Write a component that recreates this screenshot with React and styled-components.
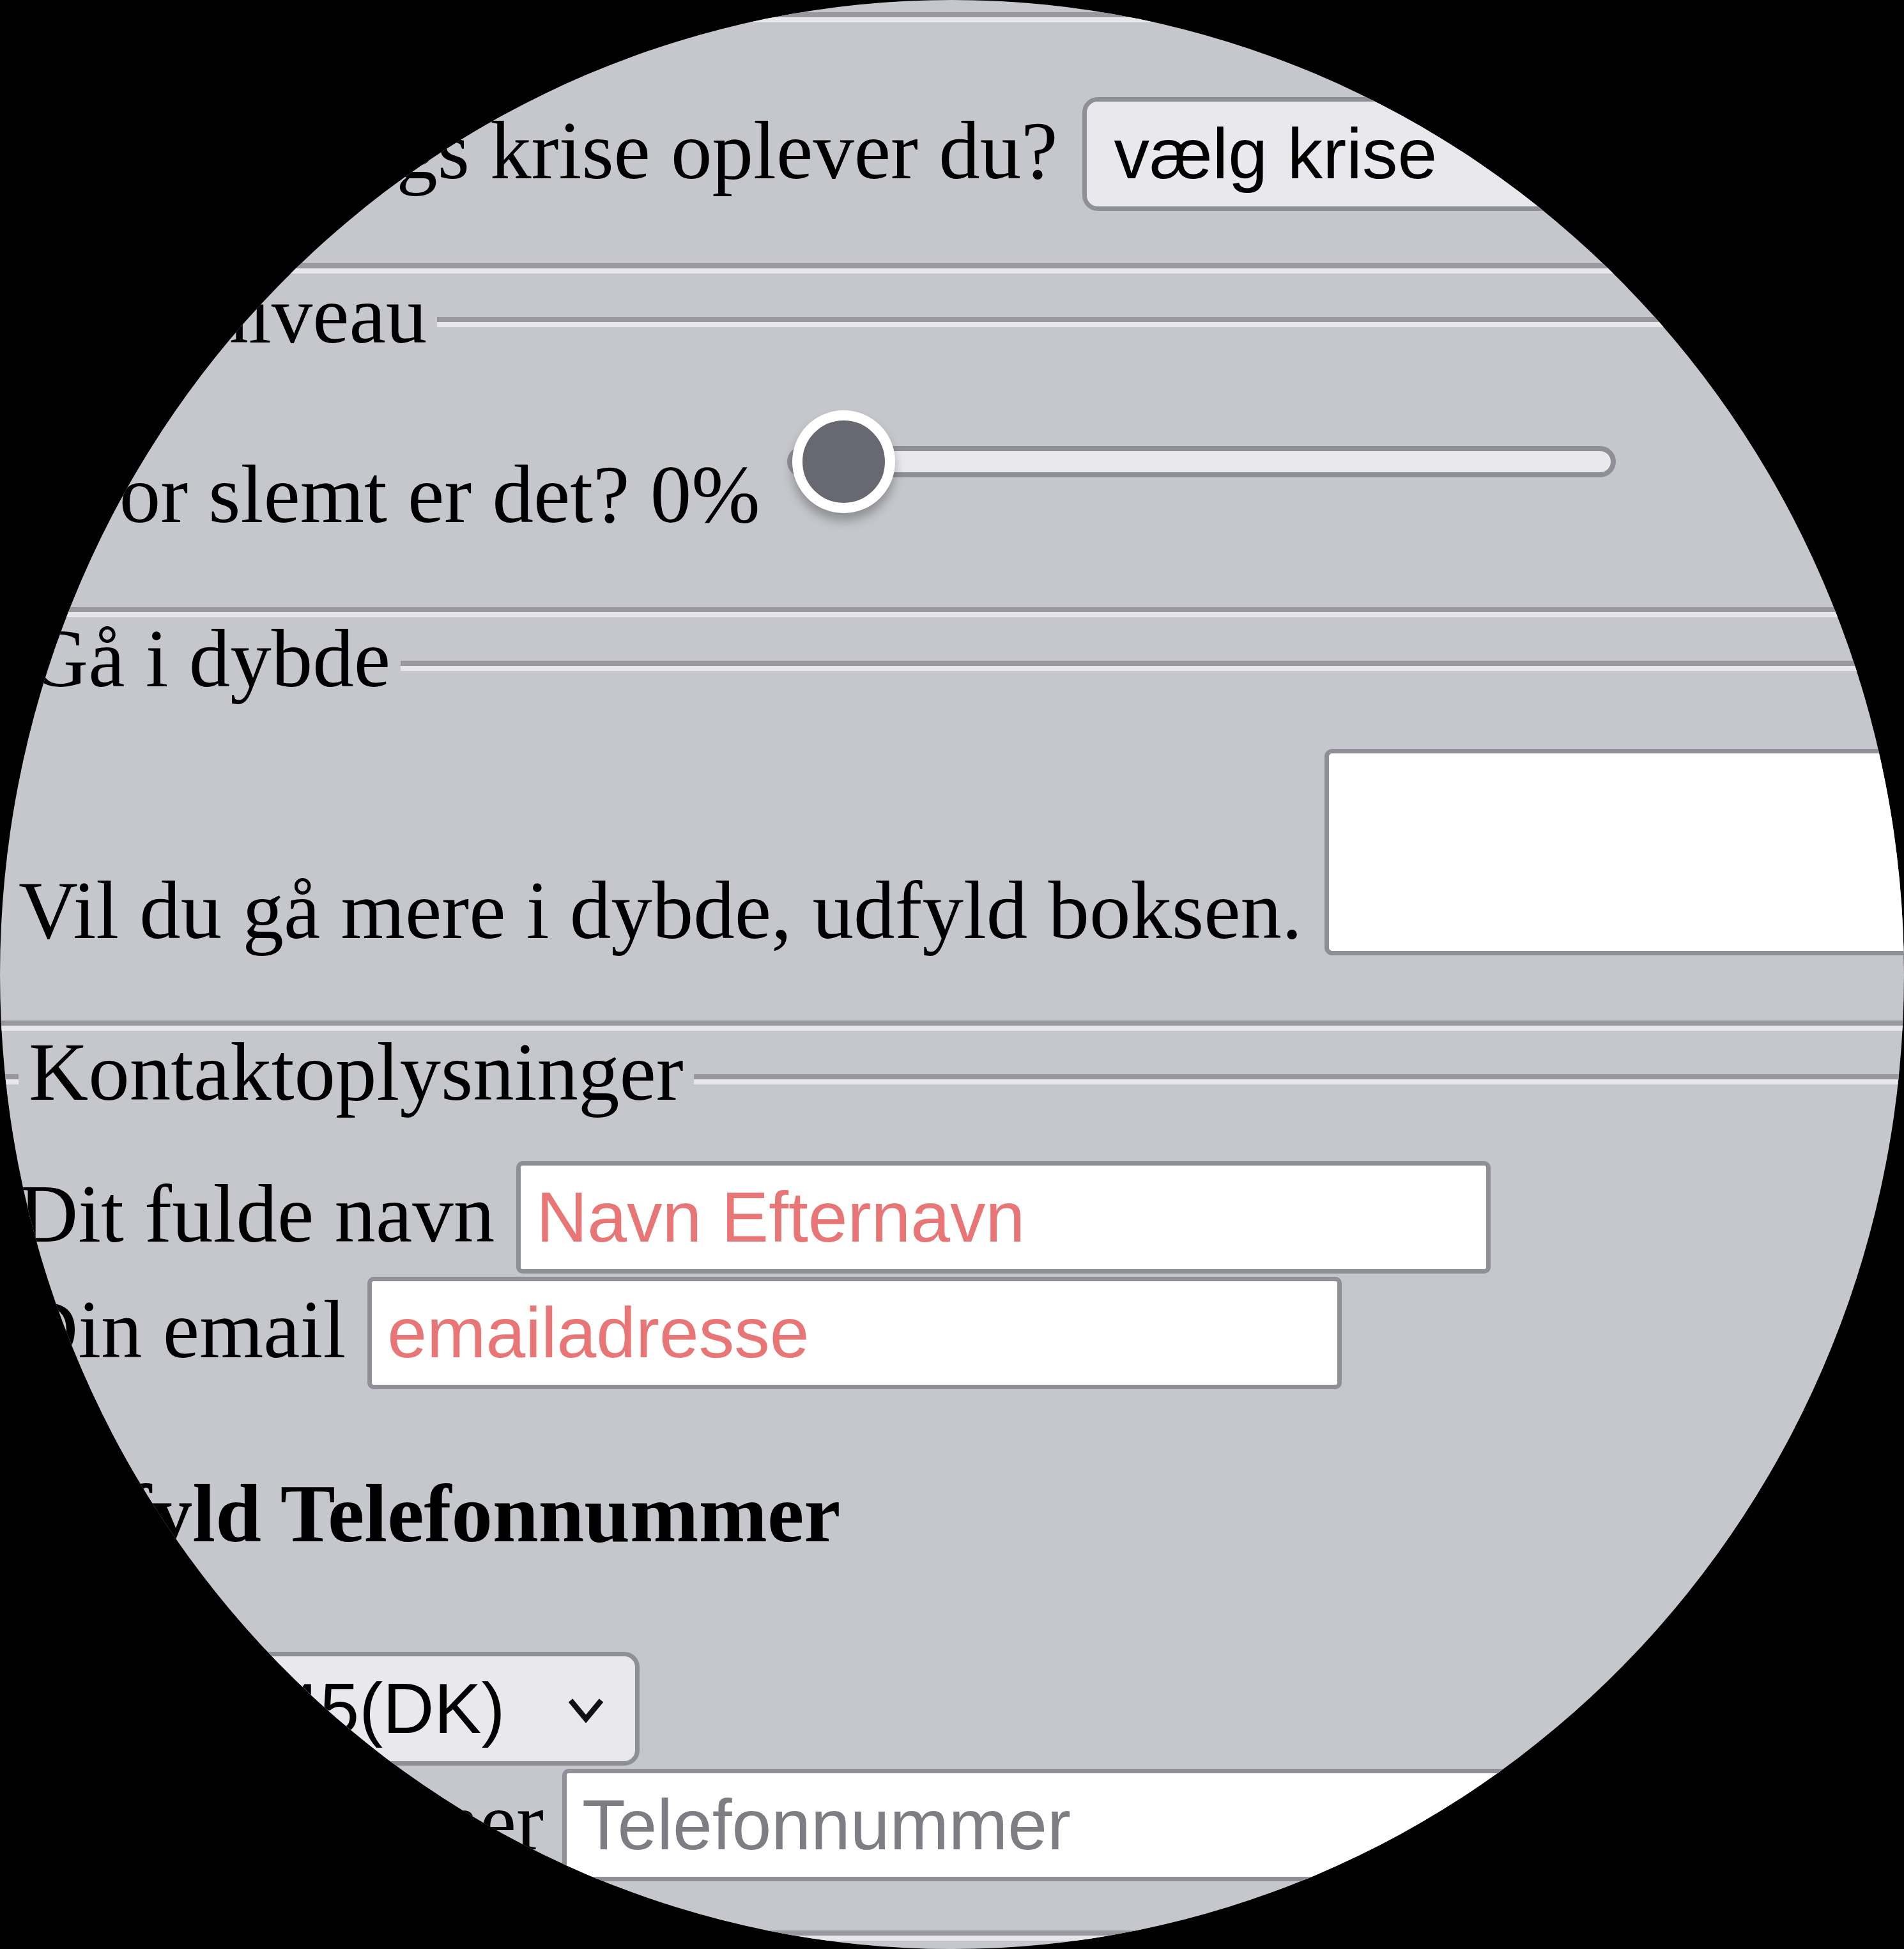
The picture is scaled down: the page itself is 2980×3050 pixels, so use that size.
import React from 'react';
import styled, { createGlobalStyle } from 'styled-components';

const GlobalStyle = createGlobalStyle`
  html, body {
    margin: 0;
    padding: 0;
    background: #000;
  }
  body {
    overflow: hidden;
  }
`;

const Lens = styled.div`
  width: 2980px;
  height: 3050px;
  border-radius: 50%;
  overflow: hidden;
  background: #c6c7cc;
`;

const Page = styled.form`
  width: 3300px;
  margin: -49px 0 0 -84px;
  font-family: "Liberation Serif", "Times New Roman", serif;
  font-size: 129px;
  line-height: 129px;
  color: #000;
`;

const Fieldset = styled.section`
  display: flex;
  flex-direction: column;
`;

const Groove = styled.div`
  box-sizing: border-box;
  height: 16px;
  border-top: 8px solid #98989e;
  border-bottom: 8px solid #e7e7eb;
  flex: ${p => (p.$fill ? 1 : 'none')};
  width: ${p => (p.$w ? `${p.$w}px` : 'auto')};
  margin-top: ${p => (p.$inLegend ? '68px' : '0')};
`;

const LegendRow = styled.div`
  display: flex;
  align-items: flex-start;
  height: 129px;
`;

const Legend = styled.span`
  padding: 0 16px;
  white-space: nowrap;
`;

const Body = styled.div`
  display: flex;
  flex-direction: column;
  align-items: flex-start;
  padding: ${p => p.$top}px 0 ${p => p.$bottom}px 113px;
`;

const Row = styled.div`
  display: flex;
  align-items: ${p => p.$align || 'baseline'};
  gap: ${p => p.$gap ?? 34}px;
  margin-top: ${p => p.$mt || 0}px;
  white-space: nowrap;
`;

const Label = styled.label`
  flex: none;
`;

const Heading = styled.h4`
  margin: ${p => p.$mt}px 0 0;
  font-size: 129px;
  line-height: 129px;
  font-weight: bold;
`;

const SelectWrap = styled.div`
  position: relative;
  display: inline-flex;
  flex: none;
`;

const Select = styled.select`
  appearance: none;
  -webkit-appearance: none;
  box-sizing: border-box;
  width: ${p => p.$w}px;
  height: 178px;
  padding: 0 130px 0 42px;
  border: 7px solid #8f8f97;
  border-radius: 24px;
  background: #e9e9ed;
  color: #000;
  font-family: "Liberation Sans", Arial, sans-serif;
  font-size: 111px;
  outline: none;
`;

const Chevron = styled.svg`
  position: absolute;
  right: 55px;
  top: 50%;
  width: 58px;
  height: 40px;
  margin-top: -18px;
  pointer-events: none;
`;

const TextInput = styled.input`
  box-sizing: border-box;
  width: 1525px;
  height: 176px;
  padding: 0 24px;
  border: 7px solid #8f8f97;
  border-radius: 10px;
  background: #fff;
  color: #000;
  font-family: "Liberation Sans", Arial, sans-serif;
  font-size: 111px;
  outline: none;
  flex: none;

  &::placeholder {
    color: ${p => (p.$warn ? '#e87676' : '#7d7d83')};
  }
`;

const TextArea = styled.textarea`
  box-sizing: border-box;
  width: 1200px;
  height: 323px;
  margin: 0 0 -6px;
  border: 7px solid #8f8f97;
  border-radius: 12px;
  background: #fff;
  resize: none;
  outline: none;
  flex: none;
`;

const Slider = styled.div`
  position: relative;
  display: flex;
  align-items: center;
  flex: none;
  width: 1297px;
  height: 161px;
  margin-bottom: 35px;
`;

const Track = styled.div`
  flex: 1;
  box-sizing: border-box;
  height: 49px;
  border: 8px solid #8f8f97;
  border-radius: 25px;
  background: #e9e8ed;
`;

const Thumb = styled.span`
  position: absolute;
  left: 8px;
  top: 0;
  box-sizing: border-box;
  width: 161px;
  height: 161px;
  border-radius: 50%;
  border: 16px solid #fff;
  background: #686872;
  box-shadow: 0 12px 16px rgba(0, 0, 0, 0.28);
`;

const Group = ({ legend, top, bottom, children }) => (
  <Fieldset>
    <LegendRow>
      <Groove $inLegend $w={113} />
      <Legend>{legend}</Legend>
      <Groove $inLegend $fill />
    </LegendRow>
    <Body $top={top} $bottom={bottom}>{children}</Body>
    <Groove />
  </Fieldset>
);

const Dropdown = ({ width, options }) => (
  <SelectWrap>
    <Select $w={width} defaultValue={options[0]}>
      {options.map(o => (
        <option key={o} value={o}>{o}</option>
      ))}
    </Select>
    <Chevron viewBox="0 0 58 40">
      <polyline points="5,5 29,34 53,5" fill="none" stroke="#111" strokeWidth="8.5" />
    </Chevron>
  </SelectWrap>
);

export default function App() {
  const level = 0;
  return (
    <>
      <GlobalStyle />
      <Lens>
        <Page>
          <Group legend="Krise" top={72} bottom={82}>
            <Row $gap={39}>
              <Label>Hvilken slags krise oplever du?</Label>
              <Dropdown width={1000} options={['vælg krise', 'Økonomisk', 'Personlig', 'Andet']} />
            </Row>
          </Group>

          <Group legend="Kriseniveau" top={85} bottom={112}>
            <Row $align="flex-end" $gap={42}>
              <Label>Hvor slemt er det? {level}%</Label>
              <Slider role="slider" aria-valuenow={level} aria-valuemin={0} aria-valuemax={100}>
                <Track />
                <Thumb style={{ left: `${8 + level * 11.28}px` }} />
              </Slider>
            </Row>
          </Group>

          <Group legend="Gå i dybde" top={77} bottom={108}>
            <Row $align="flex-end" $gap={35}>
              <Label>Vil du gå mere i dybde, udfyld boksen.</Label>
              <TextArea />
            </Row>
          </Group>

          <Group legend="Kontaktoplysninger" top={75} bottom={77}>
            <Row>
              <Label>Dit fulde navn</Label>
              <TextInput $warn placeholder="Navn Efternavn" />
            </Row>
            <Row $mt={5}>
              <Label>Din email</Label>
              <TextInput $warn placeholder="emailadresse" />
            </Row>
            <Heading $mt={130}>Udfyld Telefonnummer</Heading>
            <Row $mt={152} $gap={31}>
              <Label>Land</Label>
              <Dropdown width={676} options={['+45(DK)', '+46(SE)', '+47(NO)']} />
            </Row>
            <Row $mt={5} $gap={29}>
              <Label>Telefonnummer</Label>
              <TextInput type="tel" placeholder="Telefonnummer" />
            </Row>
          </Group>
        </Page>
      </Lens>
    </>
  );
}
